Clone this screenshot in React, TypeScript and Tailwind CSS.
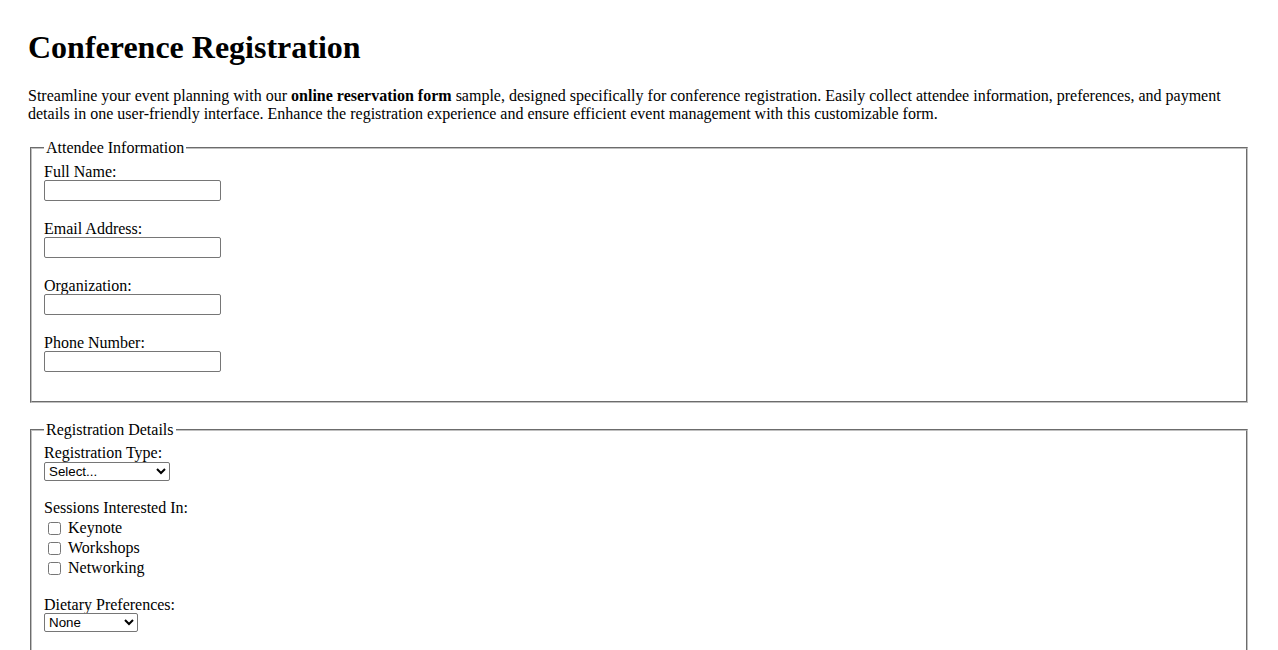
import React from "react";

const serif = "font-['Liberation_Serif','Times_New_Roman',serif]";
const sans = "font-['Liberation_Sans',Arial,sans-serif]";

function TextField({ label, type = "text" }: { label: string; type?: string }) {
  return (
    <div className="flex flex-col items-start pb-[19px]">
      <label className="leading-[18px]">{label}</label>
      <input
        type={type}
        className={`${sans} -mt-[1px] h-[21px] w-[177px] rounded-[2px] border border-[#767676] bg-white px-[2px] text-[13.33px]`}
      />
    </div>
  );
}

function Check({ label }: { label: string }) {
  return (
    <label className="flex h-[20px] items-center leading-[18px]">
      <input type="checkbox" className="ml-[4px] mr-[3px] h-[13px] w-[13px]" />
      <span className="ml-[4px]">{label}</span>
    </label>
  );
}

export default function App() {
  return (
    <div className={`${serif} bg-white px-[28px] pt-[29px] text-[16px] text-black`}>
      <h1 className="mb-[21px] text-[32px] font-bold leading-[37px]">Conference Registration</h1>
      <p className="mb-[16px] leading-[18px]">
        Streamline your event planning with our <strong>online reservation form</strong> sample, designed
        specifically for conference registration. Easily collect attendee information, preferences, and payment
        details in one user-friendly interface. Enhance the registration experience and ensure efficient event
        management with this customizable form.
      </p>
      <form>
        <fieldset className="mx-[2px] border-2 border-[#c0c0c0] px-[12px] pb-[10px] pt-[5.6px] [border-style:groove]">
          <legend className="px-[2px] leading-[18px]">Attendee Information</legend>
          <TextField label="Full Name:" />
          <TextField label="Email Address:" type="email" />
          <TextField label="Organization:" />
          <TextField label="Phone Number:" type="tel" />
        </fieldset>

        <fieldset className="mx-[2px] mt-[18px] border-2 border-[#c0c0c0] px-[12px] pb-[10px] pt-[5.6px] [border-style:groove]">
          <legend className="px-[2px] leading-[18px]">Registration Details</legend>
          <div className="flex flex-col items-start pb-[18px]">
            <label className="leading-[18px]">Registration Type:</label>
            <select
              className={`${sans} h-[19px] w-[126px] rounded-[2px] border border-[#767676] bg-white text-[13.33px]`}
            >
              <option>Select...</option>
              <option>Standard</option>
              <option>VIP</option>
              <option>Student</option>
            </select>
          </div>
          <div className="flex flex-col items-start pb-[18px]">
            <label className="leading-[18px]">Sessions Interested In:</label>
            <div className="mt-[1px] flex flex-col">
              <Check label="Keynote" />
              <Check label="Workshops" />
              <Check label="Networking" />
            </div>
          </div>
          <div className="flex flex-col items-start pb-[19px]">
            <label className="leading-[18px]">Dietary Preferences:</label>
            <select
              className={`${sans} -mt-[1px] h-[19px] w-[94px] rounded-[2px] border border-[#767676] bg-white text-[13.33px]`}
            >
              <option>None</option>
              <option>Vegetarian</option>
              <option>Vegan</option>
              <option>Gluten-Free</option>
            </select>
          </div>
        </fieldset>
      </form>
    </div>
  );
}
